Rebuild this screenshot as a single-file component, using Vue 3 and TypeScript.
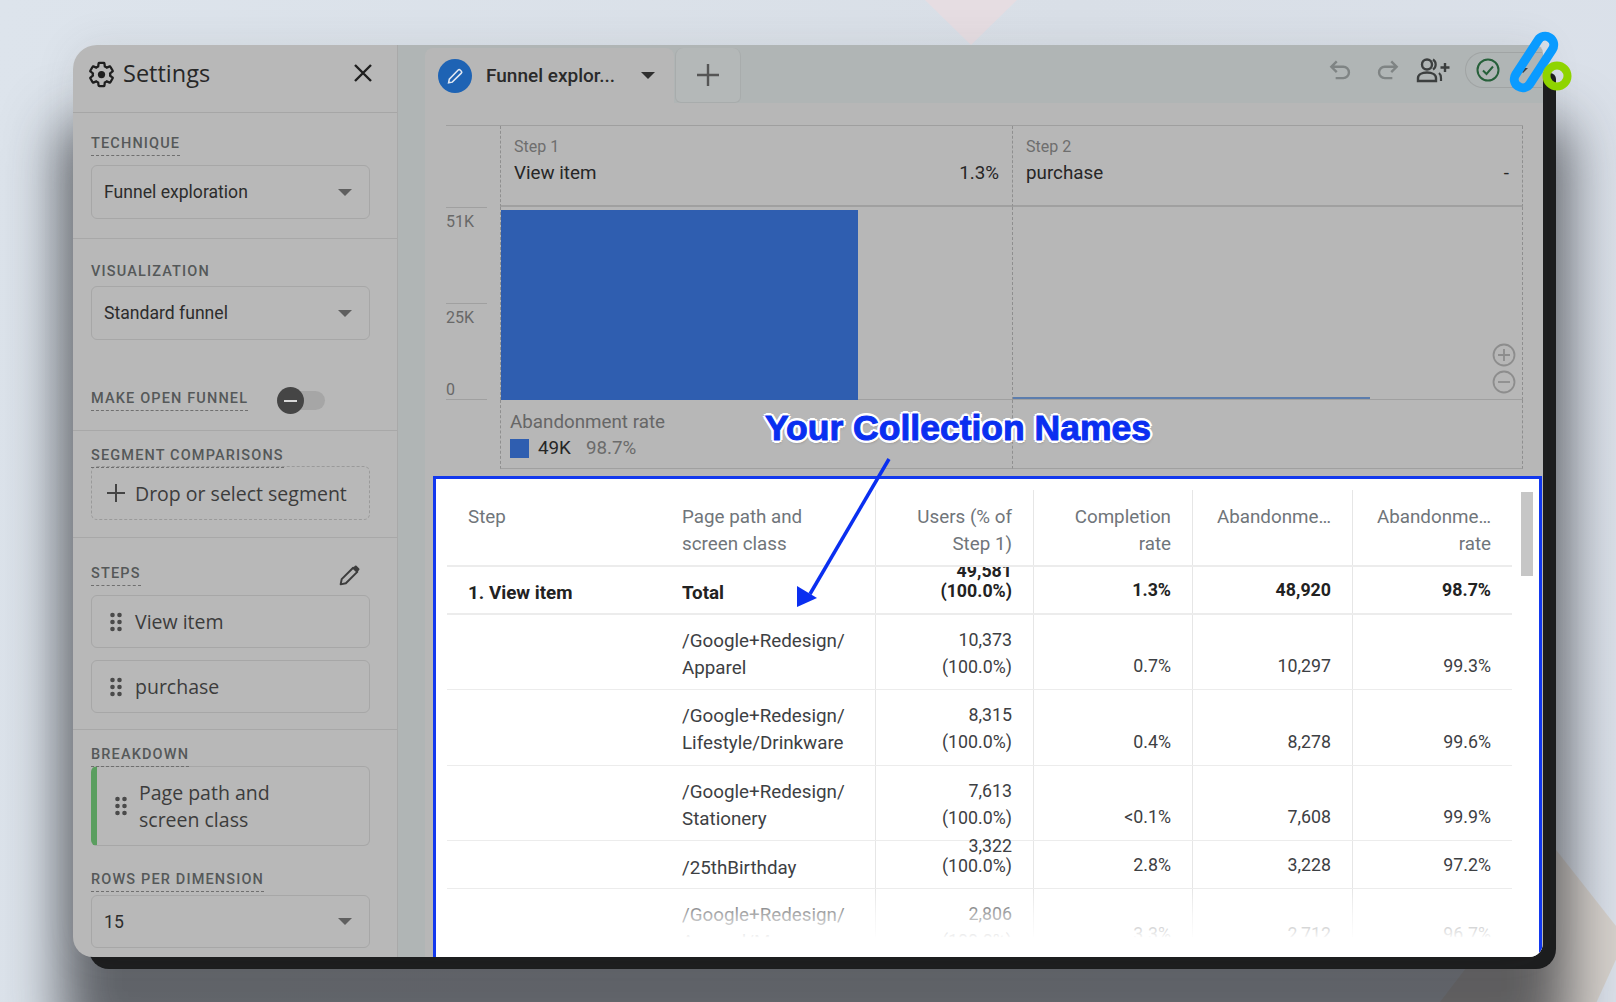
<template>
  <div class="page">
    <div class="deco-pink"></div>
    <div class="deco-beige"></div>

    <div class="device">
      <div class="bezel"></div>
      <div class="screen">
        <aside class="sidebar">
          <div class="side-head">
            <svg class="gear" viewBox="0 0 24 24" width="29" height="29">
              <path fill="none" stroke="#1f1f1f" stroke-width="1.9" d="M19.14 12.94c.04-.3.06-.61.06-.94 0-.32-.02-.64-.07-.94l2.03-1.58c.18-.14.23-.41.12-.61l-1.92-3.32c-.12-.22-.37-.29-.59-.22l-2.39.96c-.5-.38-1.03-.7-1.62-.94l-.36-2.54c-.04-.24-.24-.41-.48-.41h-3.84c-.24 0-.43.17-.47.41l-.36 2.54c-.59.24-1.13.57-1.62.94l-2.39-.96c-.22-.08-.47 0-.59.22L2.74 8.87c-.12.21-.08.47.12.61l2.03 1.58c-.05.3-.09.63-.09.94s.02.64.07.94l-2.03 1.58c-.18.14-.23.41-.12.61l1.92 3.32c.12.22.37.29.59.22l2.39-.96c.5.38 1.03.7 1.62.94l.36 2.54c.05.24.24.41.48.41h3.84c.24 0 .44-.17.47-.41l.36-2.54c.59-.24 1.13-.56 1.62-.94l2.39.96c.22.08.47 0 .59-.22l1.92-3.32c.12-.22.07-.47-.12-.61l-2.01-1.58z"/>
              <circle cx="12" cy="12" r="3" fill="#1f1f1f"/>
            </svg>
            <span class="side-title">Settings</span>
            <svg class="close" viewBox="0 0 20 20" width="20" height="20">
              <path d="M2 2l16 16M18 2L2 18" stroke="#1f1f1f" stroke-width="2.4" fill="none"/>
            </svg>
          </div>

          <section class="sec sec-tech">
            <span class="lab dashed">TECHNIQUE</span>
            <div class="sel">Funnel exploration<i class="caret"></i></div>
          </section>

          <section class="sec sec-vis">
            <span class="lab">VISUALIZATION</span>
            <div class="sel sel-vis">Standard funnel<i class="caret"></i></div>
            <div class="open-row">
              <span class="lab dashed">MAKE OPEN FUNNEL</span>
              <div class="toggle"><span class="knob"><b></b></span></div>
            </div>
          </section>

          <section class="sec sec-seg">
            <span class="lab dashed">SEGMENT COMPARISONS</span>
            <div class="drop">
              <svg viewBox="0 0 20 20" width="20" height="20"><path d="M10 1v18M1 10h18" stroke="#444" stroke-width="2" fill="none"/></svg>
              Drop or select segment
            </div>
          </section>

          <section class="sec sec-steps">
            <div class="steps-head">
              <span class="lab dashed">STEPS</span>
              <svg class="pencil" viewBox="0 0 24 24" width="25" height="25">
                <path d="M3.500 20.500l1-5L15.500 4.500l4 4L8.500 19.500z" fill="none" stroke="#3d3d3d" stroke-width="1.900" stroke-linejoin="round"/>
                <path d="M15 5l2.300-2.300a1 1 0 0 1 1.400 0l2.600 2.600a1 1 0 0 1 0 1.400L19 9z" fill="#3d3d3d"/>
              </svg>
            </div>
            <div v-for="s in steps" :key="s" class="chip">
              <svg class="grip" viewBox="0 0 12 20" width="12" height="20"><circle v-for="d in gripDots" :key="d[0] + '-' + d[1]" :cx="d[0]" :cy="d[1]" r="2.300" fill="#4a4a4a"/></svg>
              {{ s }}
            </div>
          </section>

          <section class="sec sec-break">
            <span class="lab dashed">BREAKDOWN</span>
            <div class="chip chip-break">
              <svg class="grip" viewBox="0 0 12 20" width="12" height="20"><circle v-for="d in gripDots" :key="d[0] + '-' + d[1]" :cx="d[0]" :cy="d[1]" r="2.300" fill="#4a4a4a"/></svg>
              <span>Page path and<br>screen class</span>
            </div>
            <span class="lab dashed lab-rows">ROWS PER DIMENSION</span>
            <div class="sel sel-rows">15<i class="caret"></i></div>
          </section>
        </aside>

        <main class="main">
          <div class="topbar">
            <div class="tab">
              <span class="tab-badge">
                <svg viewBox="0 0 24 24" width="22" height="22">
                  <path d="M5 19.500l.8-4L15.500 5.500a1.500 1.500 0 0 1 2.100 0l1.300 1.300a1.500 1.500 0 0 1 0 2.100L9 18.700z" fill="none" stroke="#dfe7f2" stroke-width="1.700"/>
                </svg>
              </span>
              <span class="tab-name">Funnel explor...</span>
              <i class="caret caret-dark"></i>
            </div>
            <div class="tab-add">
              <svg viewBox="0 0 24 24" width="24" height="24"><path d="M12 1v22M1 12h22" stroke="#555" stroke-width="2.400" fill="none"/></svg>
            </div>
            <div class="actions">
              <svg class="act-undo" viewBox="0 0 24 24" width="26" height="26">
                <path d="M9 4L4 9l5 5M4.500 9H15a5 5 0 0 1 0 10.500H8" fill="none" stroke="#7f8484" stroke-width="2.200"/>
              </svg>
              <svg class="act-redo" viewBox="0 0 24 24" width="26" height="26">
                <path d="M15 4l5 5-5 5M19.500 9H9a5 5 0 0 0 0 10.500h7" fill="none" stroke="#7f8484" stroke-width="2.200"/>
              </svg>
              <svg class="act-share" viewBox="0 0 34 26" width="34" height="26">
                <circle cx="11" cy="7.500" r="5" fill="none" stroke="#3c3f3f" stroke-width="2.400"/>
                <path d="M2 24v-3c0-3.500 4-5.500 9-5.500s9 2 9 5.500v3z" fill="none" stroke="#3c3f3f" stroke-width="2.400"/>
                <path d="M17 2.500a6 6 0 0 1 0 10M23 16c1.500 1.200 2 3 2 5v3" fill="none" stroke="#3c3f3f" stroke-width="2.200"/>
                <path d="M29 6v9M24.500 10.500h9" stroke="#3c3f3f" stroke-width="2.400"/>
              </svg>
              <div class="status">
                <svg viewBox="0 0 24 24" width="24" height="24">
                  <circle cx="12" cy="12" r="10.500" fill="none" stroke="#27603a" stroke-width="2"/>
                  <path d="M7 12.500l3.500 3.500L17 8.500" fill="none" stroke="#27603a" stroke-width="2"/>
                </svg>
                <i class="caret caret-small"></i>
              </div>
            </div>
          </div>

          <div class="panel">
            <div class="chart">
              <div class="axis-top"></div>
              <div class="step-head">
                <div class="step-no">Step 1</div>
                <div class="step-line"><span>View item</span><span>1.3%</span></div>
              </div>
              <div class="step-head step-last">
                <div class="step-no">Step 2</div>
                <div class="step-line"><span>purchase</span><span>-</span></div>
              </div>

              <div class="axis">
                <div class="tick"><span>51K</span></div>
                <div class="tick"><span>25K</span></div>
                <div class="tick tick-zero"><span>0</span></div>
              </div>
              <div class="plot"><div class="bar"></div></div>
              <div class="plot step-last">
                <div class="bar-thin"></div>
                <div class="zoomers">
                  <svg viewBox="0 0 24 24" width="24" height="24"><circle cx="12" cy="12" r="10.500" fill="none" stroke="#8d8d8d" stroke-width="1.800"/><path d="M6 12h12M12 6v12" stroke="#8d8d8d" stroke-width="1.800"/></svg>
                  <svg viewBox="0 0 24 24" width="24" height="24"><circle cx="12" cy="12" r="10.500" fill="none" stroke="#8d8d8d" stroke-width="1.800"/><path d="M6 12h12" stroke="#8d8d8d" stroke-width="1.800"/></svg>
                </div>
              </div>

              <div></div>
              <div class="legend">
                <div class="leg-title">Abandonment rate</div>
                <div class="leg-row"><i class="swatch"></i><span class="leg-val">49K</span><span class="leg-pct">98.7%</span></div>
              </div>
              <div class="legend step-last"></div>
            </div>

            <div class="result">
              <div class="table">
                <div class="row head">
                  <div class="cell c1"><span>Step</span></div>
                  <div class="cell c2"><span>Page path and<br>screen class</span></div>
                  <div class="cell num c3"><span>Users (% of<br>Step 1)</span></div>
                  <div class="cell num c4"><span>Completion<br>rate</span></div>
                  <div class="cell num c5"><span>Abandonme…</span></div>
                  <div class="cell num c6"><span>Abandonme…<br>rate</span></div>
                </div>
                <div v-for="r in rows" :key="r.path + r.users" class="row" :class="r.kind">
                  <div class="cell c1"><span>{{ r.step }}</span></div>
                  <div class="cell c2"><span>{{ r.path }}<template v-if="r.path2"><br>{{ r.path2 }}</template></span></div>
                  <div class="cell num c3"><span>{{ r.users }}<br>(100.0%)</span></div>
                  <div class="cell num c4 val"><span>{{ r.comp }}</span></div>
                  <div class="cell num c5 val"><span>{{ r.aband }}</span></div>
                  <div class="cell num c6 val"><span>{{ r.rate }}</span></div>
                </div>
                <div class="fade"></div>
              </div>
              <div class="scroll-track"><div class="scroll-thumb"></div></div>
            </div>
          </div>
        </main>
      </div>
    </div>

    <!-- annotation drawn on top of the screenshot -->
    <div class="note">Your Collection Names</div>
    <svg class="arrow" viewBox="0 0 120 170" width="120" height="170">
      <path d="M109 2L30 137" stroke="#0a2ff0" stroke-width="3.500" fill="none"/>
      <path d="M17 150L17 129L37 141z" fill="#0a2ff0"/>
    </svg>
    <svg class="logo" viewBox="0 0 66 66" width="66" height="66">
      <rect x="18.500" y="3" width="17" height="58" rx="8.500" transform="rotate(33 27 32)" fill="none" stroke="#0a9bff" stroke-width="9"/>
      <circle cx="50" cy="46" r="10.500" fill="none" stroke="#8fd400" stroke-width="8"/>
    </svg>
  </div>
</template>

<script setup lang="ts">
interface Row {
  kind: string
  step: string
  path: string
  path2?: string
  users: string
  comp: string
  aband: string
  rate: string
}

const steps = ['View item', 'purchase']

const gripDots = [[2.5, 3], [9.5, 3], [2.5, 10], [9.5, 10], [2.5, 17], [9.5, 17]]

const rows: Row[] = [
  { kind: 'short total', step: '1. View item', path: 'Total', users: '49,581', comp: '1.3%', aband: '48,920', rate: '98.7%' },
  { kind: 'tall r1', step: '', path: '/Google+Redesign/', path2: 'Apparel', users: '10,373', comp: '0.7%', aband: '10,297', rate: '99.3%' },
  { kind: 'tall r2', step: '', path: '/Google+Redesign/', path2: 'Lifestyle/Drinkware', users: '8,315', comp: '0.4%', aband: '8,278', rate: '99.6%' },
  { kind: 'tall r3', step: '', path: '/Google+Redesign/', path2: 'Stationery', users: '7,613', comp: '<0.1%', aband: '7,608', rate: '99.9%' },
  { kind: 'short r4', step: '', path: '/25thBirthday', users: '3,322', comp: '2.8%', aband: '3,228', rate: '97.2%' },
  { kind: 'tall r5', step: '', path: '/Google+Redesign/', path2: 'Apparel/Mens', users: '2,806', comp: '3.3%', aband: '2,712', rate: '96.7%' },
]
</script>

<style>
html, body {
  margin: 0;
  background: #dae0e8;
}
</style>

<style scoped>
.page {
  position: relative;
  width: 1616px;
  height: 1002px;
  overflow: hidden;
  padding: 45px 0 0 73px;
  box-sizing: border-box;
  background: linear-gradient(100deg, #dde4ec 0%, #d9dfe7 60%, #dbe1ea 100%);
  font-family: Roboto, "Liberation Sans", sans-serif;
  color: #2b2b2b;
}

.deco-pink {
  position: absolute;
  left: 925px;
  top: 0;
  width: 92px;
  height: 45px;
  background: #e6dde2;
  clip-path: polygon(0 0, 100% 0, 50% 100%);
}

.deco-beige {
  position: absolute;
  left: 1440px;
  top: 850px;
  width: 176px;
  height: 152px;
  background: #d6d1cc;
  clip-path: polygon(66% 0, 100% 50%, 100% 72%, 89% 100%, 0 100%);
}

.device {
  position: relative;
  width: 1470px;
  height: 912px;
}

.bezel {
  position: absolute;
  left: 16px;
  top: 28px;
  right: -13px;
  bottom: -12px;
  background: #1c1d1e;
  border-radius: 6px 6px 20px 20px;
  box-shadow: -8px 70px 55px 20px rgba(38, 40, 44, 0.68);
}

.screen {
  position: relative;
  display: flex;
  width: 100%;
  height: 100%;
  overflow: hidden;
  border-radius: 24px 8px 14px 20px;
  box-shadow: 0 0 40px rgba(70, 70, 70, 0.1);
}

/* left settings column */
.sidebar {
  width: 325px;
  flex: none;
  background: #b8b8b8;
  border-right: 1px solid #a9a9a9;
  box-sizing: border-box;
  overflow: hidden;
}

.side-head {
  display: flex;
  align-items: center;
  height: 68px;
  padding: 0 24px 11px 14px;
  box-sizing: border-box;
  border-bottom: 1px solid #a6a6a6;
  font-family: "Open Sans", sans-serif;
}

.gear {
  position: relative;
  top: 1px;
}

.side-title {
  flex: 1;
  margin-left: 7px;
  font-size: 23.500px;
  color: #272727;
}

.sec {
  padding: 0 27px 0 18px;
  border-bottom: 1px solid #a8a8a8;
}

.lab {
  display: inline-block;
  height: 18px;
  line-height: 18px;
  padding-bottom: 2px;
  border-bottom: 1px solid transparent;
  font-size: 14.500px;
  font-weight: 500;
  letter-spacing: 1.150px;
  color: #555859;
}

.dashed {
  border-bottom: 1px dashed #6f6f6f;
}

.sel {
  position: relative;
  display: flex;
  align-items: center;
  justify-content: space-between;
  height: 54px;
  box-sizing: border-box;
  padding: 0 17px 0 12px;
  border: 1px solid #a7a7a7;
  border-radius: 6px;
  font-size: 17.600px;
  color: #2c2c2c;
}

.caret {
  width: 0;
  height: 0;
  border-left: 7px solid transparent;
  border-right: 7px solid transparent;
  border-top: 7.500px solid #5f5f5f;
}

.caret-dark {
  border-top-color: #2f2f2f;
}

.caret-small {
  margin-left: 18px;
  border-left-width: 5px;
  border-right-width: 5px;
  border-top-width: 5px;
  border-top-color: #3a3a3a;
}

.sec-tech {
  padding-top: 20px;
  padding-bottom: 19px;
}

.sec-tech .sel {
  margin-top: 9px;
}

.sec-vis {
  padding-top: 22px;
  padding-bottom: 19px;
}

.sel-vis {
  margin-top: 2px;
}

.open-row {
  display: flex;
  align-items: center;
  margin-top: 50px;
}

.toggle {
  position: relative;
  width: 35px;
  height: 19px;
  margin-left: 42px;
  background: #a6a6a6;
  border-radius: 10px;
}

.knob {
  position: absolute;
  left: -13px;
  top: -4px;
  display: flex;
  align-items: center;
  justify-content: center;
  width: 27px;
  height: 27px;
  border-radius: 50%;
  background: #454545;
}

.knob b {
  width: 13px;
  height: 2px;
  background: #d8d8d8;
}

.sec-seg {
  padding-top: 14px;
  padding-bottom: 17px;
}

.drop {
  display: flex;
  align-items: center;
  gap: 9px;
  height: 54px;
  box-sizing: border-box;
  margin-top: -2px;
  padding-left: 14px;
  border: 1px dashed #9a9a9a;
  border-radius: 6px;
  font-family: "Open Sans", sans-serif;
  font-size: 19.500px;
  color: #3c3c3c;
}

.sec-steps {
  padding-top: 25px;
  padding-bottom: 16px;
}

.steps-head {
  display: flex;
  justify-content: space-between;
  align-items: center;
  padding-right: 8px;
  margin-bottom: 7px;
}

.chip {
  display: flex;
  align-items: center;
  gap: 13px;
  height: 53px;
  box-sizing: border-box;
  padding-left: 18px;
  border: 1px solid #a7a7a7;
  border-radius: 6px;
  font-family: "Open Sans", sans-serif;
  font-size: 19.500px;
  color: #3c3c3c;
}

.chip + .chip {
  margin-top: 12px;
}

.sec-break {
  padding-top: 14px;
  border-bottom: none;
}

.chip-break {
  height: 80px;
  margin-top: -1px;
  padding-left: 18px;
  gap: 12px;
  border-left: 6px solid #5a9e5f;
  line-height: 27px;
}

.lab-rows {
  margin-top: 25px;
}

.sel-rows {
  height: 53px;
  margin-top: 3px;
}

/* right side */
.main {
  flex: 1;
  display: flex;
  flex-direction: column;
  min-width: 0;
  background: #b0b5b5;
}

.topbar {
  display: flex;
  align-items: flex-end;
  height: 58px;
  flex: none;
  padding-left: 27px;
}

.tab {
  display: flex;
  align-items: center;
  width: 249px;
  height: 55px;
  box-sizing: border-box;
  padding: 0 19px 0 13px;
  background: #b7b7b7;
  border-radius: 8px 8px 0 0;
}

.tab-badge {
  display: flex;
  align-items: center;
  justify-content: center;
  width: 34px;
  height: 34px;
  border-radius: 50%;
  background: #1e63b4;
}

.tab-name {
  flex: 1;
  margin-left: 14px;
  font-size: 19px;
  font-weight: 500;
  color: #2a2a2a;
  white-space: nowrap;
}

.tab-add {
  display: flex;
  align-items: center;
  justify-content: center;
  width: 66px;
  height: 55px;
  margin-left: 1px;
  background: #b4b8b8;
  border: 1px solid #a8acac;
  border-top: none;
  box-sizing: border-box;
  border-radius: 8px 8px 6px 6px;
}

.actions {
  margin-left: auto;
  align-self: stretch;
  display: flex;
  align-items: center;
  padding-right: 1px;
  padding-bottom: 8px;
  box-sizing: border-box;
}

.act-redo {
  margin-left: 22px;
}

.act-share {
  margin-left: 15px;
}

.status {
  display: flex;
  align-items: center;
  width: 77px;
  height: 36px;
  margin-left: 15px;
  padding-left: 10px;
  box-sizing: border-box;
  border: 1px solid #a0a4a4;
  border-right: none;
  border-radius: 18px 0 0 18px;
}

.panel {
  flex: 1;
  min-height: 0;
  margin-left: 27px;
  padding: 22px 0 0 21px;
  background: #b7b7b7;
  display: flex;
  flex-direction: column;
}

.chart {
  display: grid;
  grid-template-columns: 54px 512px 511px;
  grid-template-rows: 81px 193px 69px;
  width: 1077px;
  flex: none;
  border-top: 1px solid #9f9f9f;
  box-sizing: border-box;
  height: 343px;
  font-size: 18.800px;
}

.step-head,
.plot,
.legend {
  border-left: 1px dashed #8f8f8f;
  position: relative;
}

.step-head {
  padding: 11px 13px 0 13px;
  border-bottom: 2px solid #a0a0a0;
  box-sizing: border-box;
}

.step-last {
  border-right: 1px dashed #8f8f8f;
}

.step-no {
  font-size: 16px;
  line-height: 20px;
  color: #6e6e6e;
}

.step-line {
  display: flex;
  justify-content: space-between;
  margin-top: 3px;
  line-height: 26px;
  color: #262626;
}

.axis {
  display: flex;
  flex-direction: column;
  color: #686868;
  font-size: 16px;
}

.tick {
  height: 96px;
  width: 41px;
  border-top: 1px solid #a0a0a0;
  box-sizing: border-box;
  padding-top: 4px;
  line-height: 20px;
}

.tick-zero {
  height: 1px;
  margin-top: 1px;
  padding: 0;
  position: relative;
  overflow: visible;
}

.tick-zero span {
  position: absolute;
  top: -20px;
  left: 0;
}

.plot {
  border-bottom: 1px solid #a0a0a0;
  box-sizing: border-box;
}

.bar {
  width: 357px;
  height: 190px;
  margin-top: 3px;
  background: #2f5eb0;
}

.bar-thin {
  position: absolute;
  left: 0;
  bottom: 0;
  width: 357px;
  height: 2px;
  background: #5c7dad;
}

.zoomers {
  position: absolute;
  right: 6px;
  bottom: 5px;
  display: flex;
  flex-direction: column;
  gap: 3px;
}

.zoomers svg {
  display: block;
}

.legend {
  padding: 9px 9px 0;
  border-bottom: 1px solid #a0a0a0;
  box-sizing: border-box;
}

.leg-title {
  line-height: 26px;
  color: #666;
}

.leg-row {
  display: flex;
  align-items: center;
  line-height: 26px;
}

.swatch {
  width: 19px;
  height: 19px;
  background: #2f5eb0;
}

.leg-val {
  margin-left: 9px;
  color: #262626;
}

.leg-pct {
  margin-left: 15px;
  color: #6b6b6b;
}

/* highlighted results table */
.result {
  position: relative;
  flex: 1;
  min-height: 0;
  width: 1109px;
  margin: 8px 0 0 -13px;
  box-sizing: border-box;
  border: 3px solid #1238ee;
  border-bottom: none;
  background: #fff;
  padding: 11px 0 0 11px;
  overflow: hidden;
}

.table {
  position: relative;
  width: 1065px;
  font-size: 18.800px;
  line-height: 27px;
  color: #3d4043;
}

.row {
  display: grid;
  grid-template-columns: 235px 193px 158px 159px 160px 160px;
  grid-template-rows: minmax(0, 1fr);
  border-bottom: 1px solid #ececec;
  box-sizing: border-box;
}

.cell {
  display: flex;
  box-sizing: border-box;
  overflow: hidden;
}

.c1 {
  padding-left: 21px;
}

.num {
  justify-content: flex-end;
  text-align: right;
  border-left: 1px solid #e6e6e6;
  padding-right: 21px;
  font-size: 17.800px;
}

.head {
  height: 77px;
  color: #70757a;
  border-bottom-width: 2px;
}

.head .cell {
  padding-top: 14px;
  font-size: 18.800px;
}

.tall {
  height: 75.300px;
}

.tall .c2 {
  padding-top: 13px;
}

.tall .c3 {
  padding-top: 11px;
}

.tall .val {
  align-items: flex-end;
  padding-bottom: 10px;
}

.short {
  height: 48px;
  line-height: 20px;
}

.short .cell {
  align-items: flex-end;
  padding-bottom: 13px;
}

.short .c1,
.short .c2 {
  padding-bottom: 10px;
}

.short .c3 {
  padding-bottom: 12px;
}

.total {
  font-weight: 700;
  color: #222;
  border-bottom-width: 2px;
}

.r4 .cell {
  overflow: visible;
}

.r5 {
  height: 68px;
  border-bottom: none;
}

.fade {
  position: absolute;
  left: 0;
  right: 0;
  top: 400px;
  height: 70px;
  background: linear-gradient(to bottom, rgba(255, 255, 255, 0), rgba(255, 255, 255, 0.6) 37%, rgba(255, 255, 255, 0.93) 66%, #fff 68%);
}

.scroll-track {
  position: absolute;
  left: 1085px;
  top: 13px;
  width: 12px;
}

.scroll-thumb {
  height: 84px;
  background: #c6c6c6;
}

/* overlays */
.note {
  position: absolute;
  left: 765px;
  top: 406px;
  font-family: "Liberation Sans", Arial, sans-serif;
  font-size: 35.500px;
  line-height: 44px;
  font-weight: 700;
  color: #0a2ff0;
  white-space: nowrap;
  -webkit-text-stroke: 1px #0a2ff0;
  text-shadow: 3px 0 0 #fff, -3px 0 0 #fff, 0 3px 0 #fff, 0 -3px 0 #fff, 2px 2px 0 #fff, -2px 2px 0 #fff, 2px -2px 0 #fff, -2px -2px 0 #fff, 1px 3px 3px rgba(0, 0, 0, 0.25);
}

.arrow {
  position: absolute;
  left: 780px;
  top: 457px;
}

.logo {
  position: absolute;
  left: 1507px;
  top: 30px;
}
</style>
